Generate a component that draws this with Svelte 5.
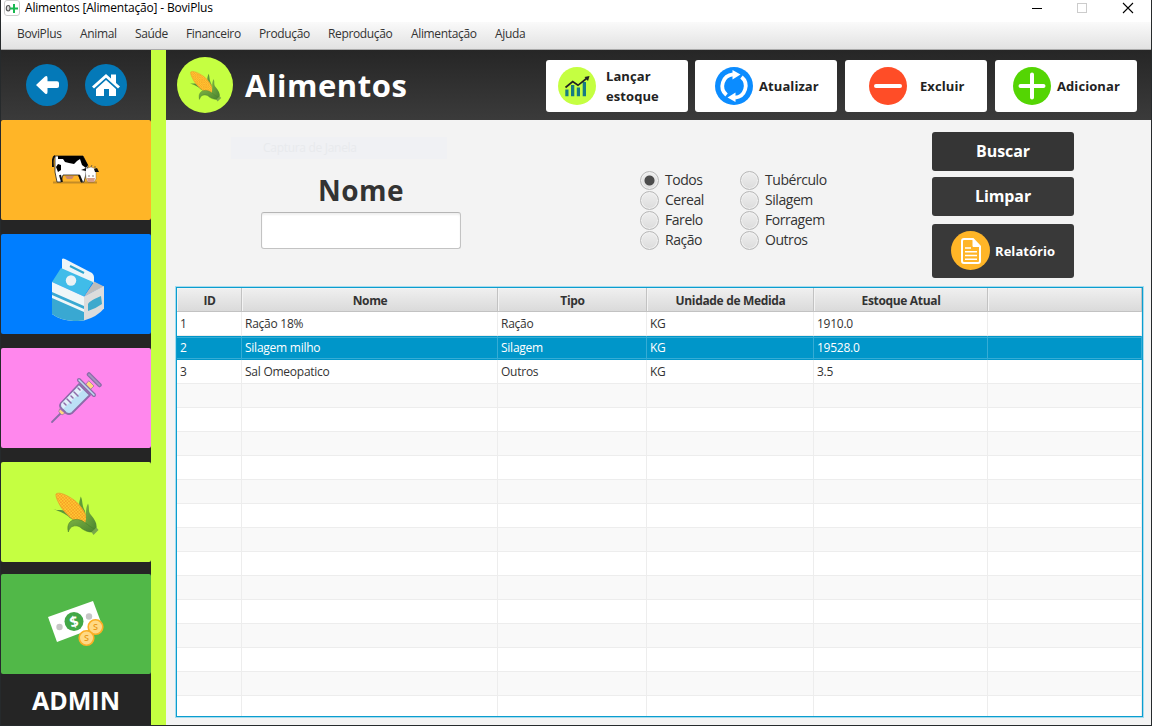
<script>
  const menus = [
    { t: 'BoviPlus', w: 63 }, { t: 'Animal', w: 55 }, { t: 'Saúde', w: 51 }, { t: 'Financeiro', w: 73 },
    { t: 'Produção', w: 69 }, { t: 'Reprodução', w: 83 }, { t: 'Alimentação', w: 84 }, { t: 'Ajuda', w: 50 }
  ];
  const types = ['Todos', 'Tubérculo', 'Cereal', 'Silagem', 'Farelo', 'Forragem', 'Ração', 'Outros'];
  const columns = ['ID', 'Nome', 'Tipo', 'Unidade de Medida', 'Estoque Atual', ''];
  const data = [
    ['1', 'Ração 18%', 'Ração', 'KG', '1910.0', ''],
    ['2', 'Silagem milho', 'Silagem', 'KG', '19528.0', ''],
    ['3', 'Sal Omeopatico', 'Outros', 'KG', '3.5', '']
  ];
  const empty = ['', '', '', '', '', ''];
  const rows = [...data, ...Array.from({ length: 14 }, () => empty)];
  let tipo = $state('Todos');
  let selected = $state(1);
  let nome = $state('');
</script>

{#snippet corn(size)}
  <svg width={size} height={size} viewBox="0 0 50 50">
    <defs>
      <pattern id="kernels" width="3.2" height="3.2" patternUnits="userSpaceOnUse" patternTransform="rotate(5)">
        <rect width="3.2" height="3.2" fill="#ffc832" />
        <path d="M0 0L3.2 3.2M3.2 0L0 3.2" stroke="#f7a126" stroke-width=".8" />
      </pattern>
      <linearGradient id="husk" x1="0" y1="0" x2="1" y2="1">
        <stop offset="0" stop-color="#7cb342" /><stop offset="1" stop-color="#4b8230" />
      </linearGradient>
    </defs>
    <path d="M2.500 22C7 24 10 22 14 24L24 34L19 31C14 26 9 25 2.500 22Z" fill="#5a9638" />
    <path d="M29 22C27 17 29 13 29.700 9.500C32 13 30.500 18 34 24L35 31Z" fill="#5f9d38" />
    <path d="M5 7C8 4.500 16 8 23 13C30 18 36 28 35.500 33C35 37 31 37.500 28 36C20 32 14 26 10 20C7 15 4.500 10 5 7Z" fill="url(#kernels)" stroke="#e9a22b" stroke-width=".8" />
    <path d="M37 16.500C39 21 36.500 24 40 28C44 33 46 36 45.500 41L42 45C35 44 32 40 34.500 35C36 29 33.500 23 37 16.500Z" fill="url(#husk)" />
    <path d="M17.300 45C15.500 37 19 33 25 32.500C33 32 36 39 44 42L42 45C37 45.500 32 43 29 40C24 37.500 19 39 17.300 45Z" fill="url(#husk)" stroke="#437a29" stroke-width=".5" />
    <path d="M40.500 45L45.500 40.500L47.500 43L42.500 48Z" fill="#79a84a" />
  </svg>
{/snippet}

<div class="window">
  <header class="titlebar">
    <svg class="logo" width="16" height="16" viewBox="0 0 16 16">
      <rect x=".5" y=".5" width="15" height="15" rx="2.5" fill="#fff" stroke="#ccc" />
      <path d="M4.300 5.500Q2.300 5.500 2.300 8.300Q2.300 11 4.300 11Q6 11 6 8.300Q6 5.500 4.300 5.500Z" fill="#ddd" stroke="#555" stroke-width="1.1" />
      <path d="M6 8.500H14M10 4V13" stroke="#18b850" stroke-width="2" />
    </svg>
    <span class="caption">Alimentos [Alimentação] - BoviPlus</span>
    <svg class="controls" width="110" height="16" viewBox="0 0 110 16">
      <path d="M5 8.5H15" stroke="#000" /><rect x="50.5" y="3.5" width="9" height="9" fill="none" stroke="#ccc" />
      <path d="M96 3L106 13M106 3L96 13" stroke="#000" stroke-width="1.1" />
    </svg>
  </header>
  <nav class="menubar">
    {#each menus as m}<span style="width:{m.w}px">{m.t}</span>{/each}
  </nav>
  <div class="app">
    <aside>
      <div class="nav">
        <svg width="42" height="42" viewBox="0 0 42 42"><circle cx="21" cy="21" r="21" fill="#0479b8" /><path d="M10 21L19 12.5Q21.5 11 21.5 14V17.3H31Q33 17.3 33 19.3V22.2Q33 24 31 24H21.5V28Q21.5 31 19 29.5Z" fill="#fff" /></svg>
        <svg width="42" height="42" viewBox="0 0 42 42"><circle cx="21" cy="21" r="21" fill="#0479b8" /><path d="M21 10L26 14.5V10.5H31V19L35 22.5L33 24.5L21 13.700L9 24.500L7 22.5Z" fill="#fff" /><path d="M21 16L31 25V32H24V25H19V32H11V25Z" fill="#fff" /></svg>
      </div>
      <button class="tile cow" aria-label="Animal">
        <svg width="48" height="30" viewBox="0 0 48 30">
          <path d="M1 27.5H45" stroke="#c48c26" stroke-width="2" />
          <path d="M3 1H31L36 11L34 19L32 27H29L27 20H11L9 27H5L3 17Z" fill="#fff" stroke="#222" stroke-width=".8" />
          <path d="M6 1H31L36 10L34 13L30 10L28 4L25 6L22 9L17 8L13 7L11 4L6 4ZM6 9L9 10L9 15L6 17L4 12Z" fill="#000" />
          <path d="M3 1Q0 2 1 12M8 20L10 27M27 20L30 27" fill="none" stroke="#111" stroke-width="2" />
          <path d="M13 21H22L20 24H15Z" fill="#c8896f" />
          <path d="M33 14L39 12L44 14L44 24L42 27H36L34 23Z" fill="#fff" stroke="#555" stroke-width=".4" />
          <path d="M29 15L34 13L34 16ZM42 14L45 13L47 17L43 17Z" fill="#111" />
          <path d="M35 23H43L42 27H36Z" fill="#d69c89" /><path d="M36 21H38M40 21H42M39 12L40 10M43 13L43 11" stroke="#444" stroke-width=".7" />
        </svg>
      </button>
      <button class="tile milk" aria-label="Leite">
        <svg width="54" height="64" viewBox="0 0 54 64">
          <path d="M11 2Q12 1 14 2L41 16Q43 18 43 20V26L11 13Z" fill="#edf5f8" />
          <path d="M19 9L33 16" stroke="#2da5ce" stroke-width="2" />
          <path d="M42 24L53 29.500L33 39.500L43 25Z" fill="#bcbcbc" />
          <path d="M10 11L42 25L33 39.500L1 25Z" fill="#40bce9" />
          <path d="M1 25L33 39.500V63.500Q13 66 1 57Z" fill="#eff6f8" />
          <path d="M1 35L33 49V52L1 38ZM1 41L33 55V63.500Q13 66 1 57Z" fill="#39a8d2" />
          <path d="M33 39.500L53 29V51.500Q46 60 33 63.500Z" fill="#dcdcdc" />
          <path d="M37 48Q36 45 50 39L51 47Q44 52 37 54Z" fill="#3ea9cd" />
          <circle cx="20" cy="23.5" r="5.200" fill="#eaf2f5" />
        </svg>
      </button>
      <button class="tile vaccine" aria-label="Saúde">
        <svg width="52" height="52" viewBox="0 0 52 52" stroke="#8d6ba8" stroke-width="1.8" stroke-linecap="round" stroke-linejoin="round">
          <path d="M2 50L11 41" />
          <path d="M39 9L44 14L40 18L35 14ZM10 37L15 41L12 43L9 40Z" fill="#ffd87e" stroke="#b186a8" stroke-width="1" />
          <path d="M11 31L29 12L40 23L22 41Q19 43 16 41L11 36Q9 34 11 31Z" fill="#bce0f5" />
          <path d="M11 32L29 14L33 18L13 37Z" fill="#e1eefa" stroke="none" />
          <path d="M29 8L44 23" stroke-width="4" /><path d="M29 8L44 23" stroke="#bcdcf0" stroke-width="1.5" />
          <path d="M39 2.500L49.500 13" stroke-width="4.500" /><path d="M39 2.500L49.500 13" stroke="#a396bd" stroke-width="1.800" />
          <path d="M14 31L16 33M17 27L21 31M21 24L23 26M24 20L28 24M28 16L30 18" stroke-width="1.5" />
        </svg>
      </button>
      <button class="tile food" aria-label="Alimentação">{@render corn(50)}</button>
      <button class="tile money" aria-label="Financeiro">
        <svg width="56" height="46" viewBox="0 0 56 46">
          <path d="M0 16L45 0L54 24L9 41Z" fill="#fff" />
          <circle cx="26" cy="20.5" r="9.5" fill="#42a847" /><circle cx="11.5" cy="26" r="3.2" fill="#c6c6c6" /><circle cx="41" cy="15.5" r="3.2" fill="#c6c6c6" />
          <text x="26" y="26" text-anchor="middle" font-size="15" font-weight="700" fill="#fff" transform="rotate(-15 26 20.5)">$</text>
          <g fill="#ffd985" stroke="#fcae25" stroke-width="1.6"><circle cx="47.5" cy="26" r="7.3" /><circle cx="38.5" cy="37" r="7.3" /></g>
          <g font-size="9" font-weight="600" fill="#e99a1a" text-anchor="middle"><text x="47.5" y="29.3">S</text><text x="38.5" y="40.3">S</text></g>
        </svg>
      </button>
      <div class="user">ADMIN</div>
    </aside>
    <div class="stripe"></div>
    <main>
      <div class="heading">
        <div class="badge">{@render corn(36)}</div>
        <h1>Alimentos</h1>
        <div class="actions">
          <button class="launch">
            <svg width="38" height="38" viewBox="0 0 38 38"><circle cx="19" cy="19" r="19" fill="#c5ff41" /><path d="M7.300 22.500H10.500V29.300H7.300ZM13 18H16.300V29.300H13ZM18.800 20.500H22V29.300H18.800ZM24.700 15H28V29.300H24.700Z" fill="#177b83" /><path d="M7.500 20.500L14.700 14.500L20 18.300L28.500 11.500" fill="none" stroke="#222" stroke-width="1.7" /><path d="M26.500 10L31.500 9L30 14Z" fill="#222" /></svg>
            <span>Lançar<br />estoque</span>
          </button>
          <button class="refresh">
            <svg width="38" height="38" viewBox="0 0 38 38"><circle cx="19" cy="19" r="19" fill="#0b8cff" /><path d="M11.500 28A11.700 11.700 0 0 1 18 7.400M26.500 10A11.700 11.700 0 0 1 20 30.600" fill="none" stroke="#fff" stroke-width="3.800" /><path d="M17.500 3L25.500 7.500L17.500 12.500ZM20.500 25.500L12.500 30.500L20.500 35Z" fill="#fff" /></svg>
            <span>Atualizar</span>
          </button>
          <button class="delete">
            <svg width="38" height="38" viewBox="0 0 38 38"><circle cx="19" cy="19" r="19" fill="#ff4d27" /><path d="M7 19H31" stroke="#fff" stroke-width="4" stroke-linecap="round" /></svg>
            <span>Excluir</span>
          </button>
          <button class="add">
            <svg width="38" height="38" viewBox="0 0 38 38"><circle cx="19" cy="19" r="19" fill="#54d503" /><path d="M7.5 19H30.500M19 7.500V30.500" stroke="#fff" stroke-width="4" stroke-linecap="round" /></svg>
            <span>Adicionar</span>
          </button>
        </div>
      </div>
      <section class="filters">
        <div class="ghost">Captura de Janela</div>
        <label class="name"><span>Nome</span><input bind:value={nome} /></label>
        <div class="radios">
          {#each types as t}
            <label><input type="radio" name="tipo" value={t} bind:group={tipo} />{t}</label>
          {/each}
        </div>
        <div class="side">
          <button class="search">Buscar</button>
          <button class="clear">Limpar</button>
          <button class="report">
            <svg width="40" height="40" viewBox="0 0 40 40"><circle cx="19.500" cy="19.500" r="19.500" fill="#ffb527" /><path d="M13 8H22L29 15.500V30Q29 32 27 32H13Q11 32 11 30V10Q11 8 13 8Z" fill="none" stroke="#fff" stroke-width="2" /><path d="M22 8V15.500H29Z" fill="#fff" stroke="#fff" /><path d="M14 17H20M14 20.800H26M14 24.500H26M14 28.300H26" stroke="#fff" stroke-width="1.600" /></svg>
            <span>Relatório</span>
          </button>
        </div>
      </section>
      <div class="table">
        <div class="row head">{#each columns as c}<div>{c}</div>{/each}</div>
        <div class="body">
          {#each rows as r, i}
            <div class="row" class:alt={i % 2 === 1} class:sel={i === selected}>
              {#each r as c}<div>{c}</div>{/each}
            </div>
          {/each}
        </div>
      </div>
    </main>
  </div>
</div>

<style>
  :global(body) { background: #202020; }
  * { box-sizing: border-box; }
  .window { width: 1152px; height: 726px; padding: 0 1px 1px; background: #262a2c; font-family: 'Open Sans', 'Noto Sans', sans-serif; font-size: 12px; color: #333; display: flex; flex-direction: column; overflow: hidden; }
  button { border: 0; padding: 0; font: inherit; color: inherit; }
  svg { flex: none; display: block; }
  .titlebar { height: 22px; flex: none; background: #fff; display: flex; align-items: flex-start; color: #000; padding-left: 3px; }
  .caption { margin-left: 5px; line-height: 16px; letter-spacing: -.18px; white-space: nowrap; }
  .controls { margin-left: auto; margin-right: 14px; }
  .menubar { height: 28px; flex: none; background: linear-gradient(#fafafa, #e2e2e2); border-bottom: 1px solid #aaa; display: flex; padding-left: 16px; line-height: 24px; letter-spacing: -.35px; }
  .menubar span { flex: none; white-space: nowrap; }
  .app { flex: 1; display: flex; min-height: 0; }
  aside { width: 150px; flex: none; background: #252525; display: flex; flex-direction: column; }
  .nav { height: 70px; flex: none; background: linear-gradient(#272727, #3a3a3a); display: flex; gap: 17px; padding: 14px 0 0 25px; }
  .tile { height: 100px; flex: none; border-radius: 2px; display: flex; align-items: center; justify-content: center; margin-bottom: 14px; }
  .cow { background: #ffb527; }
  .milk { background: #007eff; padding: 10px 0 0 3px; }
  .vaccine { background: #ff87ed; }
  .food { background: #c5ff41; margin-bottom: 12px; }
  .money { background: #51b848; margin: 0; }
  .user { flex: 1; color: #fff; font-size: 25px; font-weight: 700; text-align: center; line-height: 53px; }
  .stripe { width: 15px; flex: none; background: #c5ff41; }
  main { flex: 1; min-width: 0; background: #f3f3f3; display: flex; flex-direction: column; }
  .heading { height: 70px; flex: none; background: linear-gradient(#262626, #3b3b3b); display: flex; align-items: center; padding: 0 14px 0 11px; }
  .badge { width: 56px; height: 56px; border-radius: 50%; background: #c5ff41; display: grid; place-items: center; }
  h1 { margin: 0 0 0 12px; color: #fff; font-size: 31px; line-height: 40px; font-weight: 700; letter-spacing: .55px; }
  .actions { display: flex; gap: 8px; margin: 2px 0 0 auto; }
  .actions button { width: 142px; height: 52px; background: #fff; border-radius: 3px; display: flex; align-items: center; text-align: left; font-weight: 700; font-size: 13px; line-height: 20px; letter-spacing: .08px; color: #222; }
  .actions .launch { padding-left: 12px; gap: 10px; margin-right: -1px; }
  .actions .refresh { padding-left: 20px; gap: 6px; }
  .actions .delete { padding-left: 24px; gap: 13px; }
  .actions .add { padding-left: 18px; gap: 6px; }
  .filters { height: 167px; flex: none; display: flex; position: relative; }
  .ghost { position: absolute; left: 65px; top: 17px; width: 216px; height: 22px; line-height: 21px; padding-left: 32px; background: #f0f1f4; color: #e8eaed; letter-spacing: -.3px; }
  .name { position: relative; margin: 51px 0 0 95px; width: 200px; height: 78px; display: flex; flex-direction: column; }
  .name span { font-size: 28px; line-height: 38px; font-weight: 700; text-align: center; height: 41px; letter-spacing: .5px; }
  .name input { width: 200px; height: 37px; border: 1px solid #c3c3c3; border-top-color: #b5b5b5; border-radius: 3px; background: #fff; box-shadow: inset 0 2px 2px #f0f0f0; outline: 0; }
  .radios { display: grid; grid-template-columns: 100px 100px; grid-auto-rows: 20px; margin: 50px 0 0 179px; font-size: 14px; letter-spacing: -.45px; height: 80px; }
  .radios label { display: flex; align-items: center; gap: 6px; line-height: 20px; }
  .radios input { appearance: none; flex: none; margin: 0; width: 19px; height: 19px; border: 1px solid #b7b7b7; border-radius: 50%; background: linear-gradient(#eee, #dcdcdc); box-shadow: inset 0 0 0 1px #f1f1f1; }
  .radios input:checked { background: radial-gradient(circle, #4c4c4c 0 4.500px, transparent 5.500px), linear-gradient(#eee, #dcdcdc); }
  .side { margin: 12px 0 0 92px; width: 142px; color: #fff; font-weight: 700; }
  .side button { display: block; width: 142px; height: 39px; background: #353535; border-radius: 3px; font-size: 16px; letter-spacing: -.1px; margin-bottom: 6px; padding-bottom: 1px; }
  .side .clear { background: #393939; margin-bottom: 8px; }
  .side .report { height: 54px; background: #393939; display: flex; align-items: center; gap: 4px; padding: 0 0 0 19px; font-size: 13px; letter-spacing: .05px; }
  .table { margin-left: 10px; width: 967px; height: 430px; border: 1px solid #0b9dcf; box-shadow: 0 0 0 1px #a5dcee; overflow: hidden; background: #fff; padding-top: 0; }
  .row { display: grid; grid-template-columns: 65px 256px 149px 167px 174px 1fr; height: 24px; line-height: 23px; letter-spacing: -.25px; background: #fff; }
  .row div { border-right: 1px solid #ededed; border-bottom: 1px solid #ededed; padding-left: 3px; white-space: nowrap; overflow: hidden; }
  .row.alt { background: #f9f9f9; }
  .row.sel { background: #0096c9; color: #fff; }
  .row.sel div { border-color: #35acd5; border-bottom-color: #0096c9; box-shadow: inset 0 1px #0096c9, inset 0 2px #35acd5, inset 0 -1px #35acd5; }
  .row.head { background: linear-gradient(#f0f0f0, #d9d9d9); font-weight: 700; line-height: 25px; letter-spacing: -.33px; }
  .row.head div { text-align: center; padding: 0 0 0 1px; border-color: #c2c2c2; box-shadow: inset 1px 1px #f3f3f3; }
</style>
